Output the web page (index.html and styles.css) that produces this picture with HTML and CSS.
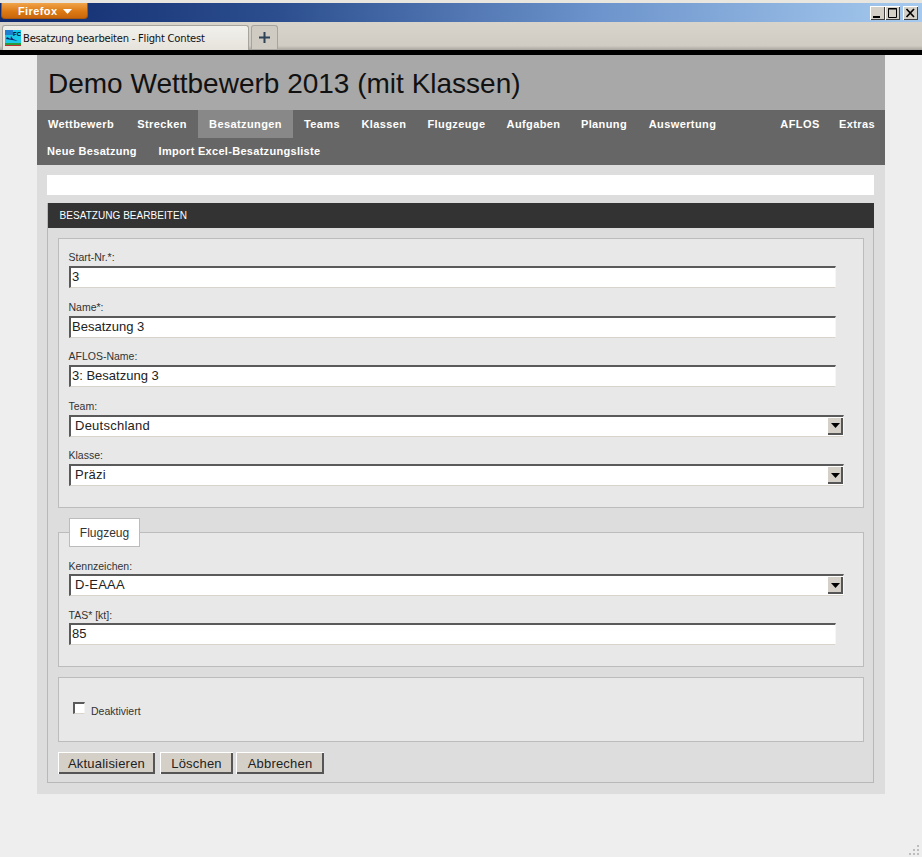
FILE: index.html
```html
<!DOCTYPE html>
<html lang="de">
<head>
<meta charset="utf-8">
<title>Besatzung bearbeiten - Flight Contest</title>
<link rel="stylesheet" href="styles.css">
</head>
<body>
<div class="titlebar">
  <div class="ff-button">Firefox<svg class="ff-arrow" width="9" height="5" viewBox="0 0 9 5"><path d="M0 0H9L4.5 5Z" fill="#fff"/></svg></div>
  <div class="win-buttons">
    <div class="win-btn"><svg width="15" height="14" viewBox="0 0 15 14"><rect x="3" y="10" width="7" height="2" fill="#000"/></svg></div>
    <div class="win-btn"><svg width="15" height="14" viewBox="0 0 15 14"><path d="M3.5 2.5h8v9h-8z M3 3h9" fill="none" stroke="#000"/></svg></div>
    <div class="win-btn win-close"><svg width="15" height="14" viewBox="0 0 15 14"><path d="M3.5 3L11 11M11 3L3.5 11" fill="none" stroke="#000" stroke-width="1.7"/></svg></div>
  </div>
</div>
<div class="tabbar">
  <div class="tab">
    <svg class="favicon" width="16" height="16" viewBox="0 0 16 16">
      <rect width="16" height="16" fill="#18c8e8"/>
      <rect x="0" y="0" width="8" height="5" fill="#1e7fd0"/>
      <rect y="13" width="16" height="2" fill="#2a9a3a"/>
      <rect y="15" width="16" height="1" fill="#c03030"/>
      <path d="M1 9L13 11L8 9L6 6L5.5 9L2 7Z" fill="#10206a"/>
      <text x="8" y="6" class="fav-text">FC</text>
    </svg>
    <span class="tab-label">Besatzung bearbeiten - Flight Contest</span>
  </div>
  <div class="newtab"><svg width="11" height="11" viewBox="0 0 11 11"><path d="M5.5 0V11M0 5.5H11" stroke="#2e4258" stroke-width="2"/></svg></div>
</div>
<div class="blackbar"></div>
<main class="page">
  <header class="site-head"><h1>Demo Wettbewerb 2013 (mit Klassen)</h1></header>
  <nav class="nav">
    <div class="nav-row nav-main">
      <a class="nav-item">Wettbewerb</a>
      <a class="nav-item">Strecken</a>
      <a class="nav-item active">Besatzungen</a>
      <a class="nav-item">Teams</a>
      <a class="nav-item">Klassen</a>
      <a class="nav-item">Flugzeuge</a>
      <a class="nav-item">Aufgaben</a>
      <a class="nav-item">Planung</a>
      <a class="nav-item">Auswertung</a>
      <a class="nav-item push">AFLOS</a>
      <a class="nav-item">Extras</a>
    </div>
    <div class="nav-row nav-sub">
      <a class="nav-item">Neue Besatzung</a>
      <a class="nav-item">Import Excel-Besatzungsliste</a>
    </div>
  </nav>
  <div class="content">
    <div class="message"></div>
    <section class="box">
      <h2 class="box-head">BESATZUNG BEARBEITEN</h2>
      <div class="box-body">
        <fieldset class="fs fs-main">
          <div class="field"><label>Start-Nr.*:</label><div class="input">3</div></div>
          <div class="field"><label>Name*:</label><div class="input">Besatzung 3</div></div>
          <div class="field"><label>AFLOS-Name:</label><div class="input">3: Besatzung 3</div></div>
          <div class="field"><label>Team:</label><div class="select"><span>Deutschland</span><i class="drop"><svg width="9" height="5" viewBox="0 0 9 5"><path d="M0 0H9L4.5 5Z" fill="#000"/></svg></i></div></div>
          <div class="field"><label>Klasse:</label><div class="select"><span>Präzi</span><i class="drop"><svg width="9" height="5" viewBox="0 0 9 5"><path d="M0 0H9L4.5 5Z" fill="#000"/></svg></i></div></div>
        </fieldset>
        <fieldset class="fs fs-plane">
          <legend>Flugzeug</legend>
          <div class="field"><label>Kennzeichen:</label><div class="select"><span>D-EAAA</span><i class="drop"><svg width="9" height="5" viewBox="0 0 9 5"><path d="M0 0H9L4.5 5Z" fill="#000"/></svg></i></div></div>
          <div class="field"><label>TAS* [kt]:</label><div class="input">85</div></div>
        </fieldset>
        <fieldset class="fs fs-check">
          <div class="check-row"><span class="checkbox"></span><span class="check-label">Deaktiviert</span></div>
        </fieldset>
        <div class="buttons">
          <button class="btn b1">Aktualisieren</button>
          <button class="btn b2">Löschen</button>
          <button class="btn b3">Abbrechen</button>
        </div>
      </div>
    </section>
  </div>
</main>
<svg class="grip" width="13" height="13" viewBox="0 0 13 13" fill="#bdbdbd">
  <rect x="9" y="1" width="2" height="2"/><rect x="5" y="5" width="2" height="2"/><rect x="9" y="5" width="2" height="2"/>
  <rect x="1" y="9" width="2" height="2"/><rect x="5" y="9" width="2" height="2"/><rect x="9" y="9" width="2" height="2"/>
</svg>
</body>
</html>
```
FILE: styles.css
```css
* { box-sizing: border-box; }
html, body { margin: 0; padding: 0; height: 857px; overflow: hidden; }
body { background: #eeeeee; font-family: "Liberation Sans", Arial, sans-serif; color: #222; position: relative; }

.titlebar { height: 22px; border-top: 3px solid #e8e6df;
  background: linear-gradient(90deg, #0f2a6e 0%, #2c4e8e 30%, #6d94cc 65%, #a6caee 100%); position: relative; }
.ff-button { position: absolute; left: 1px; top: 0; width: 87px; height: 16px; background: linear-gradient(#f0a44a, #dd7a14 55%, #c9660c);
  border: 1px solid #a8590f; border-top: 0; border-radius: 0 0 4px 4px; color: #fff; font-weight: bold; font-size: 11px; letter-spacing: 0.4px; line-height: 15px;
  padding: 1px 0 0 16px; display: flex; align-items: center; gap: 6px; }
.win-buttons { position: absolute; right: 4px; top: 3px; display: flex; }
.win-btn { width: 15px; height: 14px; background: #d4d0c8; box-shadow: inset 1px 1px 0 #fff, inset -1px -1px 0 #404040; }
.win-close { margin-left: 3px; }

.tabbar { height: 28px; background: linear-gradient(#d8d4cc, #d0ccc4 85%, #a8a59e); display: flex; align-items: flex-start; padding: 3px 0 0 2px; gap: 2px; }
.tab { width: 247px; height: 25px; background: linear-gradient(#f2f0eb, #e6e3dc); border: 1px solid #a6a49e; border-bottom: 0; border-radius: 3px 3px 0 0;
  display: flex; align-items: center; padding-left: 2px; gap: 2px; font-size: 11px; color: #111; }
.tab-label { font-family: "DejaVu Sans", sans-serif; font-size: 10px; letter-spacing: -0.22px; }
.favicon { flex: none; }
.fav-text { font: bold 6px "Liberation Sans", sans-serif; fill: #000; }
.newtab { width: 27px; height: 24px; background: #cfcbc3; border: 1px solid #a6a49e; border-bottom: 0; border-radius: 3px 3px 0 0; display: flex; align-items: center; justify-content: center; }
.blackbar { height: 5px; background: #000; }

.page { width: 848px; height: 739px; margin-left: 37px; background: #dddddd; }
.site-head { height: 55px; background: #a8a8a8; padding: 13px 0 0 11px; }
.site-head h1 { margin: 0; font-weight: normal; font-size: 28px; line-height: 32px; color: #111; }

.nav { background: #666666; height: 55px; }
.nav-row { display: flex; margin-left: -1px; }
.nav-main { height: 28px; }
.nav-sub { height: 27px; }
.nav-item { font-size: 11px; font-weight: bold; letter-spacing: 0.4px; color: #fff; line-height: 28px; text-align: center; white-space: nowrap; }
.nav-sub .nav-item { line-height: 26px; letter-spacing: 0.3px; }
.nav-item.active { background: #888888; }
.nav-item.push { margin-left: auto; }
.nav-main .nav-item:nth-child(1) { width: 90px; }
.nav-main .nav-item:nth-child(2) { width: 72px; }
.nav-main .nav-item:nth-child(3) { width: 95px; }
.nav-main .nav-item:nth-child(4) { width: 58px; }
.nav-main .nav-item:nth-child(5) { width: 66px; }
.nav-main .nav-item:nth-child(6) { width: 79px; }
.nav-main .nav-item:nth-child(7) { width: 75px; }
.nav-main .nav-item:nth-child(8) { width: 66px; }
.nav-main .nav-item:nth-child(9) { width: 91px; }
.nav-main .nav-item:nth-child(10) { width: 58px; }
.nav-main .nav-item:nth-child(11) { width: 56px; }
.nav-sub .nav-item:nth-child(1) { width: 112px; }
.nav-sub .nav-item:nth-child(2) { width: 183px; }

.content { padding: 10px 11px 0 10px; }
.message { height: 20px; background: #fff; }
.box { margin-top: 8px; border-bottom: 1px solid #b8b8b8; border-left: 1px solid #b8b8b8; border-right: 1px solid #b8b8b8; height: 580px; }
.box-head { margin: 0 -0.5px; height: 25px; background: #333333; color: #fff; font-weight: normal; font-size: 10px; line-height: 25px; padding-left: 12px; letter-spacing: 0.05px; }
.box-body { padding: 10px 9px 0 10px; }

.fs { margin: 0; padding: 0 0 0 10px; border: 1px solid #bcbcbc; background: #e8e8e8; min-width: 0; }
.fs-main { height: 270px; padding-top: 12px; }
.fs-plane { height: 149px; margin-top: 10px; padding-top: 13px; }
.fs-plane legend { margin: 0 auto 0 0; padding: 0; width: 71px; height: 29px; background: #fff; border: 1px solid #bcbcbc; font-size: 12px; line-height: 28px; text-align: center; color: #333; }
.fs-check { height: 65px; margin-top: 10px; padding: 24px 0 0 14px; }

.field { height: 49.6px; }
.fs-plane .field { height: 49px; }
.fs-plane .field label { height: 14px; }
.field label { display: block; font-size: 10.5px; line-height: 13px; height: 15px; margin-left: -0.5px; color: #333; }
.input, .select { height: 22px; background: #fff; color: #222; border-style: solid; border-width: 2px 1px 1px 2px; border-color: #5a5a5a #f6f6f4 #d8d4cc #5a5a5a;
  font-size: 13px; line-height: 18px; }
.input { width: 767px; padding-left: 1px; }
.select { width: 775px; padding-left: 4px; letter-spacing: 0.25px; display: flex; justify-content: space-between; }
.drop { width: 16px; height: 18px; background: #d4d0c8; box-shadow: inset 1px 1px 0 #fff, inset -2px -2px 0 #555; display: flex; align-items: center; justify-content: center; }

.check-row { display: flex; align-items: flex-start; }
.checkbox { width: 12px; height: 12px; background: #fff; border-style: solid; border-width: 2px 1px 1px 2px; border-color: #5a5a5a #f4f4f2 #d8d4cc #5a5a5a; }
.check-label { font-size: 10.5px; line-height: 13px; margin: 3px 0 0 6px; color: #333; }

.buttons { display: flex; margin-top: 10px; }
.btn { height: 22px; padding: 0; background: #d4d0c8; border: 0; font-family: "Liberation Sans", sans-serif; font-size: 13px; letter-spacing: 0.2px; color: #222;
  box-shadow: inset 1px 1px 0 #fff, inset -2px -2px 0 #555; }
.b1 { width: 97px; }
.b2 { width: 73px; margin-left: 5px; }
.b3 { width: 88px; margin-left: 3px; }

.grip { position: absolute; right: 1px; bottom: 0; }
```
